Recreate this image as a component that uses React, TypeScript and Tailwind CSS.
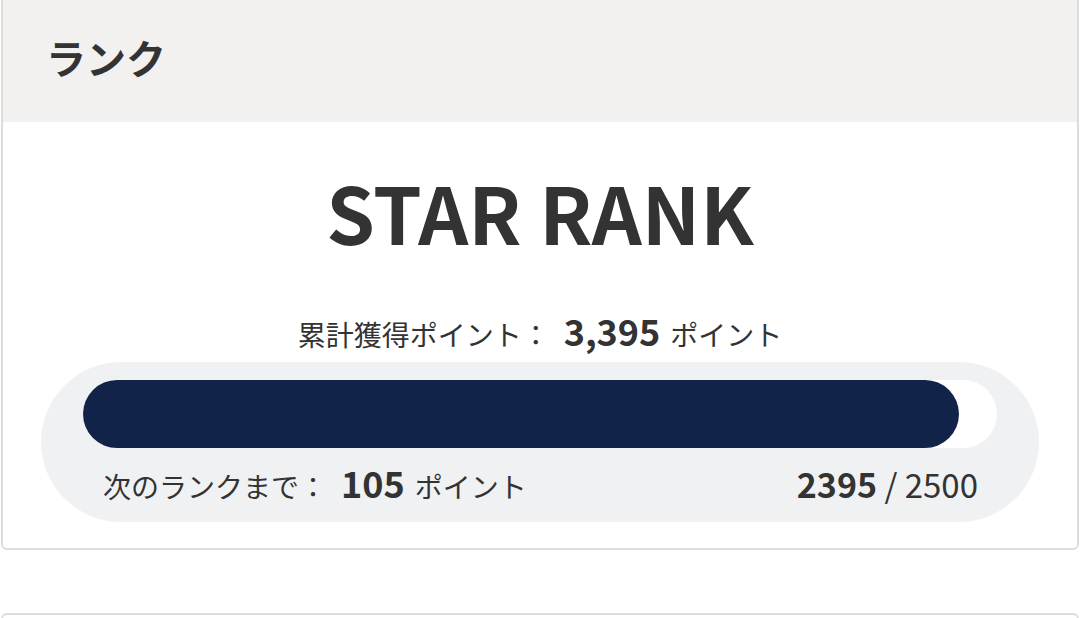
export default function App() {
  const current = 2395;
  const target = 2500;
  const pct = (current / target) * 100;

  return (
    <div
      className="min-h-screen bg-white text-[#333333]"
      style={{ fontFamily: '"Noto Sans CJK JP", "Noto Sans", sans-serif' }}
    >
      <div className="mx-[1px] -mt-2 overflow-hidden rounded-b-md border-2 border-[#dcdcdc] bg-white">
        <div className="flex h-[128px] items-center bg-[#f2f1f0] pb-[2px] pl-[43px]">
          <h2 className="text-[40px] font-bold leading-none">ランク</h2>
        </div>
        <div className="flex flex-col items-center pb-[26px] pt-[50px]">
          <p className="text-[78px] font-bold leading-none">STAR RANK</p>
          <p className="mt-[62px] flex items-baseline text-[28px] leading-none">
            累計獲得ポイント：
            <span className="ml-[14px] mr-[10px] text-[36px] font-bold">3,395</span>
            ポイント
          </p>
          <div className="mt-[14px] w-[998px] rounded-[80px] bg-[#f0f1f3] px-[42px] pb-[21px] pt-[18px]">
            <div className="h-[68px] w-full rounded-full bg-white">
              <div
                className="h-full rounded-full bg-[#12234a]"
                style={{ width: `${pct}%` }}
              />
            </div>
            <div className="mt-[16px] flex items-baseline justify-between pl-[20px] pr-[19px] leading-none">
              <p className="flex items-baseline text-[28px]">
                次のランクまで：
                <span className="ml-[14px] mr-[10px] text-[36px] font-bold">105</span>
                ポイント
              </p>
              <p className="text-[33px]">
                <span className="text-[34px] font-bold">2395</span> / 2500
              </p>
            </div>
          </div>
        </div>
      </div>
      <div className="mx-[1px] mt-[63px] h-[40px] rounded-t-md border-2 border-b-0 border-[#dcdcdc] bg-white" />
    </div>
  );
}
